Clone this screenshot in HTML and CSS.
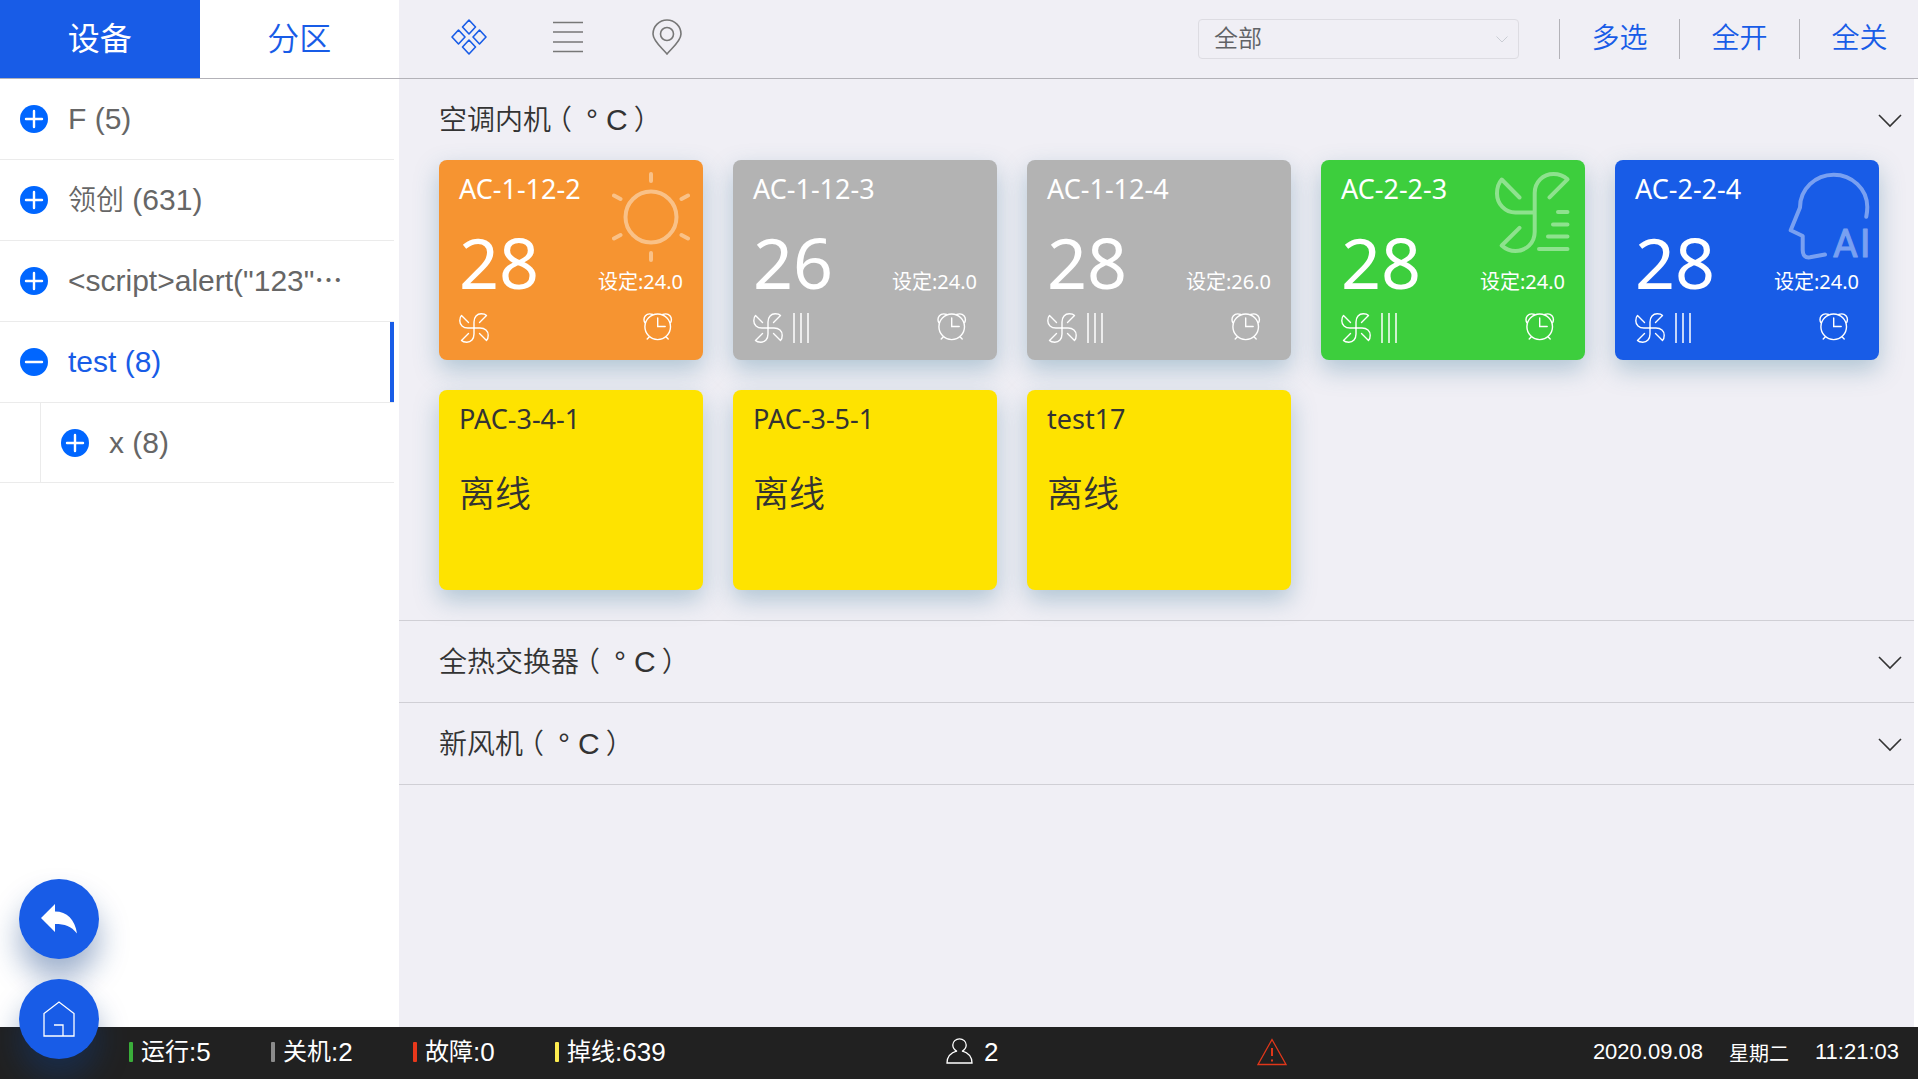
FILE: index.html
```html
<!DOCTYPE html>
<html lang="zh-CN">
<head>
<meta charset="utf-8">
<meta name="viewport" content="width=device-width, initial-scale=1">
<title>设备</title>
<link rel="stylesheet" href="styles.css">
</head>
<body>
<svg class="sprite" aria-hidden="true">
  <symbol id="plus" viewBox="0 0 28 28"><circle cx="14" cy="14" r="14" fill="#06f"/><path d="M6 14h16M14 6v16" stroke="#fff" stroke-width="2.400" stroke-linecap="round"/></symbol>
  <symbol id="minus" viewBox="0 0 28 28"><circle cx="14" cy="14" r="14" fill="#06f"/><path d="M6 14h16" stroke="#fff" stroke-width="2.400" stroke-linecap="round"/></symbol>
  <symbol id="chevron" viewBox="0 0 24 14"><path d="M1 1l11 11L23 1" fill="none" stroke="currentColor" stroke-width="1.600"/></symbol>
  <symbol id="fan" viewBox="0 0 30 30">
    <g fill="none" stroke="currentColor" stroke-width="1.400" stroke-linecap="round" stroke-linejoin="round">
      <path id="blade" d="M15 15V9C15 4 18 .8 22.200 .8c2.300 0 4.300 .6 5.300 1.700L20.500 9.500"/>
      <use href="#blade" transform="rotate(90 15 15)"/><use href="#blade" transform="rotate(180 15 15)"/><use href="#blade" transform="rotate(270 15 15)"/>
    </g>
  </symbol>
  <symbol id="speed" viewBox="0 0 16 30"><path d="M1 0v30M8 0v30M15 0v30" stroke="currentColor" stroke-width="2" opacity=".75"/></symbol>
  <symbol id="alarm" viewBox="0 0 30 30">
    <g fill="none" stroke="currentColor" stroke-width="1.400" stroke-linecap="round">
      <circle cx="14.700" cy="13.800" r="12.800"/><path d="M14.700 5v8.500h7.500M6.200 24l-2 2M23.200 24l2 2"/>
      <path d="M1.700 9.500C-.5 4.500 3.200 -.8 9.700 1.500M27.700 9.500C29.900 4.500 26.200 -.8 19.700 1.500"/>
    </g>
  </symbol>
</svg>

<header class="topbar">
  <nav class="tabs">
    <button class="tab tab-on" type="button">设备</button>
    <button class="tab" type="button">分区</button>
  </nav>
  <div class="views">
    <button class="view view-on" type="button" aria-label="卡片"><svg width="36" height="36" viewBox="0 0 36 36" fill="none" stroke="currentColor" stroke-width="1.600" stroke-linejoin="round"><path d="M18 1l6.500 7L18 15l-6.500-7zM18 21l6.500 7L18 35l-6.500-7zM7.500 11l6.500 7-6.500 7L1 18zM28.500 11l6.500 7-6.500 7-6.500-7z"/></svg></button>
    <button class="view" type="button" aria-label="列表"><svg width="30" height="32" viewBox="0 0 30 32" stroke="currentColor" stroke-width="1.600"><path d="M0 1.500h30M0 11h30M0 21h30M0 30.500h30"/></svg></button>
    <button class="view" type="button" aria-label="地图"><svg width="30" height="36" viewBox="0 0 30 36" fill="none" stroke="currentColor" stroke-width="1.600"><path d="M15 35C10 29 1 22 1 15a14 14 0 0 1 28 0c0 7-9 14-14 20z"/><circle cx="15" cy="15" r="6.500"/></svg></button>
  </div>
  <div class="filter">
    <select class="filter-select" aria-label="筛选"><option>全部</option></select>
    <svg class="filter-arrow" width="12" height="7"><use href="#chevron"/></svg>
  </div>
  <div class="actions">
    <button class="action" type="button">多选</button>
    <button class="action" type="button">全开</button>
    <button class="action" type="button">全关</button>
  </div>
</header>

<div class="body">
  <aside class="side">
    <ul class="tree">
      <li><button class="node" type="button"><svg class="knob"><use href="#plus"/></svg><span>F (5)</span></button></li>
      <li><button class="node" type="button"><svg class="knob"><use href="#plus"/></svg><span><span class="han">领创</span> (631)</span></button></li>
      <li><button class="node" type="button"><svg class="knob"><use href="#plus"/></svg><span>&lt;script&gt;alert("123"<span class="dots">⋯</span></span></button></li>
      <li><button class="node node-on" type="button"><svg class="knob"><use href="#minus"/></svg><span>test (8)</span></button>
        <ul class="subtree">
          <li><button class="node node-child" type="button"><svg class="knob"><use href="#plus"/></svg><span>x (8)</span></button></li>
        </ul>
      </li>
    </ul>
  </aside>

  <main class="main">
    <section class="group">
      <button class="group-head" type="button"><span>空调内机<span class="measure">（<span class="degree">°</span><span class="unit">C</span>）</span></span><svg width="24" height="14"><use href="#chevron"/></svg></button>
      <div class="cards">
        <article class="card orange">
          <svg class="art" viewBox="0 0 90 96"><circle cx="46" cy="49" r="25.500"/><path d="M46 6v7M46 85v7M9 27.500l6.500 3.500M83 27.500l-6.500 3.500M9 70.500l6.500-3.500M83 70.500l-6.500-3.500"/></svg>
          <h3 class="name">AC-1-12-2</h3>
          <div class="reading"><span class="temp">28</span><span class="goal">设定:24.0</span></div>
          <div class="icons"><svg class="ico"><use href="#fan"/></svg><svg class="ico ico-end"><use href="#alarm"/></svg></div>
        </article>
        <article class="card gray">
          <h3 class="name">AC-1-12-3</h3>
          <div class="reading"><span class="temp">26</span><span class="goal">设定:24.0</span></div>
          <div class="icons"><svg class="ico"><use href="#fan"/></svg><svg class="ico ico-speed"><use href="#speed"/></svg><svg class="ico ico-end"><use href="#alarm"/></svg></div>
        </article>
        <article class="card gray">
          <h3 class="name">AC-1-12-4</h3>
          <div class="reading"><span class="temp">28</span><span class="goal">设定:26.0</span></div>
          <div class="icons"><svg class="ico"><use href="#fan"/></svg><svg class="ico ico-speed"><use href="#speed"/></svg><svg class="ico ico-end"><use href="#alarm"/></svg></div>
        </article>
        <article class="card green">
          <svg class="art" viewBox="0 0 90 96"><path d="M32.500 29.500L14.700 11.500C11.500 15 10 20 10 25.500C10 36 18 44.500 28.500 44.500H47.700M62.500 29.300L80.500 11.300C76.500 7.500 72 6 66.500 6C56 6 47.700 14 47.700 25V64C47.700 75 39 83 28.500 83C23 83 18.500 81 14.700 77.500L32.500 59.800M71 44h9.500M66 56.500h14.500M61 68.500h19.500M52 81h28.500"/></svg>
          <h3 class="name">AC-2-2-3</h3>
          <div class="reading"><span class="temp">28</span><span class="goal">设定:24.0</span></div>
          <div class="icons"><svg class="ico"><use href="#fan"/></svg><svg class="ico ico-speed"><use href="#speed"/></svg><svg class="ico ico-end"><use href="#alarm"/></svg></div>
        </article>
        <article class="card blue">
          <svg class="art" viewBox="0 0 90 96"><path d="M85.300 48.700C86 45 86.300 42 86.300 39C86.300 21 71 6.700 52.700 6.700S19 21 19 39.500L9.700 62.300L21.700 68V82C21.700 87 24 90 29 89.300L44 86.500"/><text x="52 79" y="89">AI</text></svg>
          <h3 class="name">AC-2-2-4</h3>
          <div class="reading"><span class="temp">28</span><span class="goal">设定:24.0</span></div>
          <div class="icons"><svg class="ico"><use href="#fan"/></svg><svg class="ico ico-speed"><use href="#speed"/></svg><svg class="ico ico-end"><use href="#alarm"/></svg></div>
        </article>
        <article class="card yellow"><h3 class="name">PAC-3-4-1</h3><p class="offline">离线</p></article>
        <article class="card yellow"><h3 class="name">PAC-3-5-1</h3><p class="offline">离线</p></article>
        <article class="card yellow"><h3 class="name">test17</h3><p class="offline">离线</p></article>
      </div>
    </section>
    <section class="group">
      <button class="group-head" type="button"><span>全热交换器<span class="measure">（<span class="degree">°</span><span class="unit">C</span>）</span></span><svg width="24" height="14"><use href="#chevron"/></svg></button>
    </section>
    <section class="group">
      <button class="group-head" type="button"><span>新风机<span class="measure">（<span class="degree">°</span><span class="unit">C</span>）</span></span><svg width="24" height="14"><use href="#chevron"/></svg></button>
    </section>
  </main>
</div>

<footer class="status">
  <ul class="counts">
    <li class="count run"><span class="count-label">运行</span>:5</li>
    <li class="count off"><span class="count-label">关机</span>:2</li>
    <li class="count fault"><span class="count-label">故障</span>:0</li>
    <li class="count lost"><span class="count-label">掉线</span>:639</li>
  </ul>
  <div class="users"><svg width="28" height="28" viewBox="0 0 28 28" fill="none" stroke="#fff" stroke-width="1.300"><path d="M11 13.500C8 11.500 6.800 9.500 6.800 7A6.700 6.200 0 0 1 20.200 7c0 2.500-1.200 4.500-4.200 6.500M11 12.800C5 14.500 1 19 1 25h25c0-6-4-10.500-10-12.200"/></svg><span>2</span></div>
  <svg width="30" height="28" viewBox="0 0 30 28" fill="none" stroke="#e0371a" stroke-width="1.300"><path d="M15 1.500L1 26.500h28z"/><path d="M15 10v8M15 21.500v2" stroke-width="2"/></svg>
  <div class="clock"><time>2020.09.08</time><span class="weekday">星期二</span><time>11:21:03</time></div>
</footer>

<div class="fabs">
  <button class="fab" type="button" aria-label="返回"><svg width="36" height="30" viewBox="0 0 36 30"><path d="M0 14L14 0v7.500c12 0 20 8 22 22C30 22 24 20 14 20v8z" fill="#fff"/></svg></button>
  <button class="fab" type="button" aria-label="首页"><svg width="32" height="36" viewBox="0 0 32 36" fill="none" stroke="#fff" stroke-width="1.300"><path d="M1 35V12.500L16 1l15 11.500V35zM11 24h9v11"/></svg></button>
</div>
</body>
</html>
```
FILE: styles.css
```css
* { box-sizing: border-box; }

body {
  margin: 0;
  min-height: 100vh;
  display: flex;
  flex-direction: column;
  background: #fff;
  color: #333;
  font-family: "Liberation Sans", "Noto Sans CJK SC", sans-serif;
}

button, select { font: inherit; color: inherit; background: none; border: 0; padding: 0; cursor: pointer; }
ul { list-style: none; margin: 0; padding: 0; }
h3, p { margin: 0; font-weight: 400; }
svg { display: block; flex: none; }
.sprite { position: absolute; width: 0; height: 0; }

/* top bar */
.topbar {
  display: flex;
  align-items: center;
  height: 79px;
  border-bottom: 1px solid #b3b2b8;
  background: #f0eff5;
}
.tabs { display: flex; width: 399px; height: 100%; background: #fff; }
.tab { flex: 1; padding-bottom: 6px; font-size: 32px; font-weight: 350; color: #185ce7; }
.tab-on { background: #185ce7; color: #fff; font-weight: 400; }
.views { display: flex; gap: 59px; padding: 0 0 4px 50px; color: #777; }
.view { display: grid; place-items: center; width: 40px; height: 40px; }
.view-on { color: #185ce7; }
.filter { display: grid; align-items: center; width: 321px; margin-left: auto; margin-right: 40px; }
.filter-select {
  grid-area: 1 / 1;
  appearance: none;
  height: 40px;
  padding: 0 0 2px 15px;
  border: 1px solid #dddce2;
  border-radius: 4px;
  font-size: 24px;
  font-weight: 350;
  color: #606266;
}
.filter-arrow { grid-area: 1 / 1; justify-self: end; margin-right: 11px; color: #c0c4cc; pointer-events: none; }
.actions { display: flex; margin-right: -1px; }
.action { width: 120px; height: 40px; border-left: 1px solid #b3b2b8; font-size: 28px; font-weight: 350; line-height: 40px; color: #185ce7; }

/* body */
.body { flex: 1; display: flex; }
.side { width: 399px; padding-right: 5px; }
.node {
  display: flex;
  align-items: center;
  gap: 20px;
  width: 100%;
  height: 81px;
  padding-left: 20px;
  border-bottom: 1px solid #ebebeb;
  font-size: 30px;
  line-height: 36px;
  color: #666;
  text-align: left;
  white-space: nowrap;
}
.node-on { color: #185ce7; box-shadow: inset -4px 0 #185ce7; }
.subtree { padding-left: 40px; border-bottom: 1px solid #ebebeb; }
.node-child { height: 79px; border-bottom: 0; border-left: 1px solid #ebebeb; }
.knob { width: 28px; height: 28px; }
.han { font-size: 28px; font-weight: 350; }
.dots { font-size: 28px; font-weight: 500; }

.main { flex: 1; margin-right: 4px; background: #f0eff5; }
.group { border-bottom: 1px solid #d0cfd5; }
.group-head {
  display: flex;
  align-items: center;
  justify-content: space-between;
  width: 100%;
  height: 81px;
  padding: 2px 12px 0 40px;
  font-family: "Noto Sans CJK SC", sans-serif;
  font-size: 28px;
  font-weight: 350;
  line-height: 36px;
  color: #333;
}
.group-head > span { padding-bottom: 4px; }
.measure { margin-left: 7px; font-feature-settings: "halt"; }
.degree { display: inline-block; width: 28px; margin-left: 6px; font-family: "Liberation Sans", sans-serif; font-size: 30px; }
.unit { margin-right: 6px; font-family: "Liberation Sans", sans-serif; font-size: 30px; }

.cards { display: grid; grid-template-columns: repeat(auto-fill, 264px); gap: 30px; padding: 0 34px 30px 40px; }
.card {
  position: relative;
  height: 200px;
  padding: 10px 20px 0;
  border-radius: 8px;
  box-shadow: 0 10px 24px rgba(57, 118, 149, .34);
  color: #fff;
  font-family: "Noto Sans", "Noto Sans CJK SC", sans-serif;
}
.orange { background: #f69431; }
.gray { background: #b3b3b3; }
.green { background: #3dce3d; }
.blue { background: #185ce7; }
.yellow { background: #fee300; color: #333; }
.art {
  position: absolute;
  top: 8px;
  right: 8px;
  width: 90px;
  height: 96px;
  overflow: visible;
  opacity: .42;
  fill: none;
  stroke: #fff;
  stroke-width: 4;
  stroke-linecap: round;
  stroke-linejoin: round;
}
.art text { font: 38px Roboto, sans-serif; fill: #fff; stroke-width: 1; }
.name { font-size: 27px; line-height: 38px; }
.reading { display: flex; justify-content: space-between; align-items: baseline; height: 72px; margin-top: 18px; }
.temp { font-size: 70px; line-height: 72px; }
.goal { font-size: 20px; line-height: 28px; }
.icons { display: flex; gap: 10px; margin-top: 15px; }
.ico { width: 30px; height: 30px; }
.ico-speed { width: 16px; }
.ico-end { margin-left: auto; margin-right: 10px; }
.offline { margin-top: 20px; font-size: 36px; line-height: 72px; font-weight: 350; }

/* status bar */
.status {
  display: grid;
  grid-template-columns: 84fr 32fr 6fr 60fr;
  align-items: center;
  height: 52px;
  padding: 0 19px 2px 129px;
  background: #212121;
  color: #fff;
  font-size: 26px;
}
.counts { display: grid; grid-template-columns: repeat(4, 142px); }
.count { display: flex; align-items: center; line-height: 36px; }
.count::before { content: ""; width: 4px; height: 20px; margin-right: 8px; border-radius: 1px; background: currentColor; }
.count-label { font-size: 24px; }
.run::before { background: #3aae3a; }
.off::before { background: #8c8c8c; }
.fault::before { background: #e8381b; }
.lost::before { background: #fdec4f; }
.users { display: flex; align-items: center; gap: 10px; }
.clock { display: flex; align-items: center; justify-content: flex-end; gap: 26px; font-size: 22px; }
.weekday { font-size: 20px; }

/* floating buttons */
.fabs { position: fixed; left: 19px; bottom: 20px; display: grid; gap: 20px; }
.fab {
  display: grid;
  place-items: center;
  width: 80px;
  height: 80px;
  border-radius: 50%;
  background: #185ce7;
  box-shadow: 0 20px 30px rgba(16, 60, 130, .4);
}
```
